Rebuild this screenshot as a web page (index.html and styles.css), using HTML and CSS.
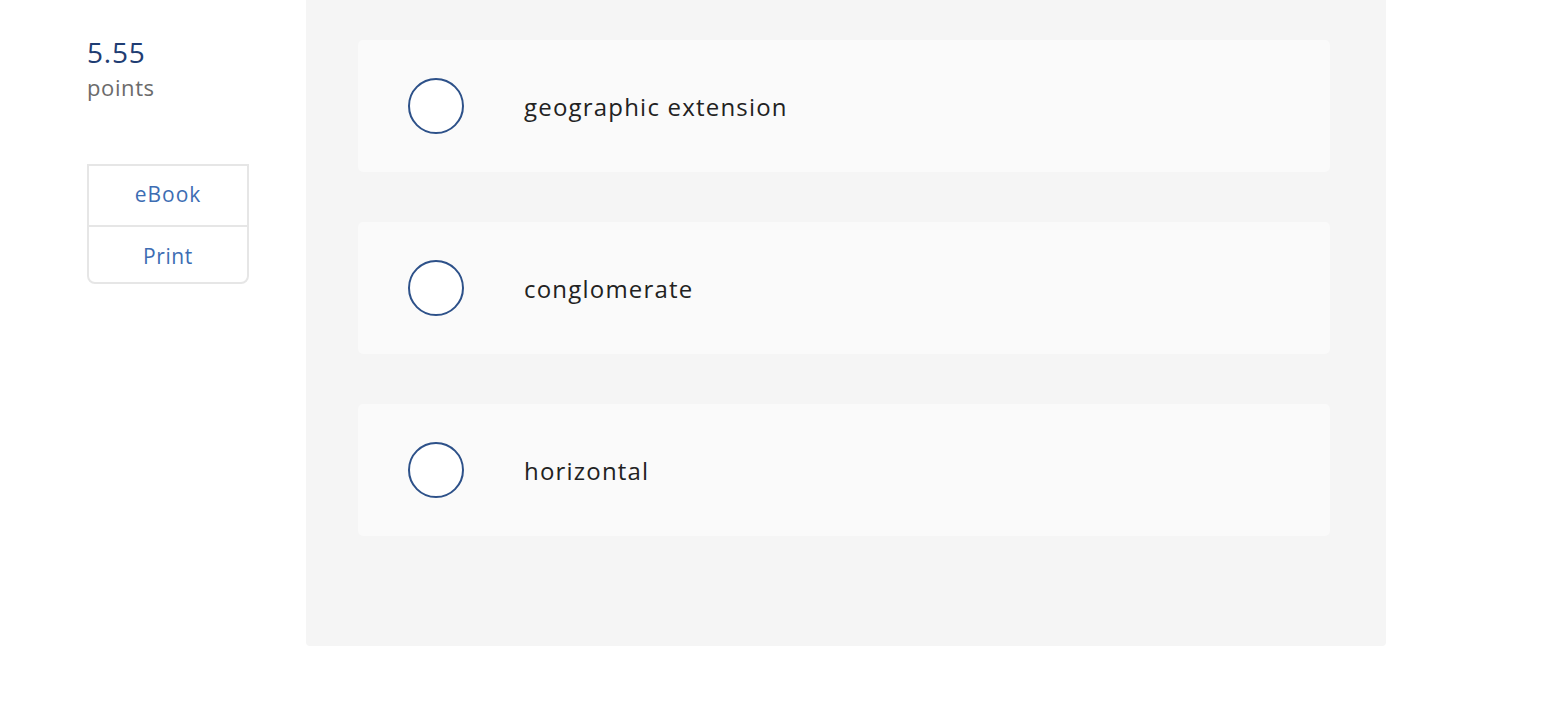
FILE: index.html
```html
<!DOCTYPE html>
<html>
<head>
<meta charset="utf-8">
<link rel="stylesheet" href="styles.css">
</head>
<body>
<div class="page">
  <aside class="side">
    <div class="score">5.55</div>
    <div class="points">points</div>
    <div class="tools">
      <div class="tool">eBook</div>
      <div class="tool">Print</div>
    </div>
  </aside>
  <main class="panel">
    <div class="option"><span class="radio"></span><span class="label">geographic extension</span></div>
    <div class="option"><span class="radio"></span><span class="label">conglomerate</span></div>
    <div class="option"><span class="radio"></span><span class="label">horizontal</span></div>
  </main>
</div>
</body>
</html>
```
FILE: styles.css
```css
html, body {
  margin: 0;
  padding: 0;
  background: #ffffff;
  font-family: "Open Sans", Lato, sans-serif;
}
.page {
  display: flex;
  align-items: flex-start;
}
.side {
  width: 162px;
  margin-left: 87px;
  margin-right: 57px;
  padding-top: 34px;
}
.score {
  font-size: 28px;
  line-height: 36px;
  letter-spacing: 0.8px;
  color: #1f3d73;
}
.points {
  font-size: 22px;
  line-height: 34px;
  letter-spacing: 0.6px;
  color: #6b6b6b;
}
.tools {
  margin-top: 60px;
  border: 2px solid #e6e6e6;
  border-radius: 0 0 8px 8px;
}
.tool {
  height: 59px;
  display: flex;
  align-items: center;
  justify-content: center;
  font-size: 21px;
  letter-spacing: 1px;
  color: #3d6db3;
  padding-bottom: 3px;
  box-sizing: border-box;
}
.tool + .tool {
  border-top: 2px solid #e6e6e6;
  height: 57px;
  padding-bottom: 0;
  padding-top: 2px;
  letter-spacing: 0.6px;
}
.panel {
  width: 1080px;
  box-sizing: border-box;
  background: #f5f5f5;
  border-radius: 0 0 4px 4px;
  padding: 40px 56px 110px 52px;
  display: flex;
  flex-direction: column;
  gap: 50px;
}
.option {
  height: 132px;
  background: #fafafa;
  border-radius: 5px;
  display: flex;
  align-items: center;
  padding-left: 50px;
}
.radio {
  width: 52px;
  height: 52px;
  border: 2px solid #2d5189;
  border-radius: 50%;
  background: #ffffff;
  flex: none;
}
.label {
  margin-left: 60px;
  font-size: 24px;
  letter-spacing: 1.2px;
  color: #222222;
}
```
